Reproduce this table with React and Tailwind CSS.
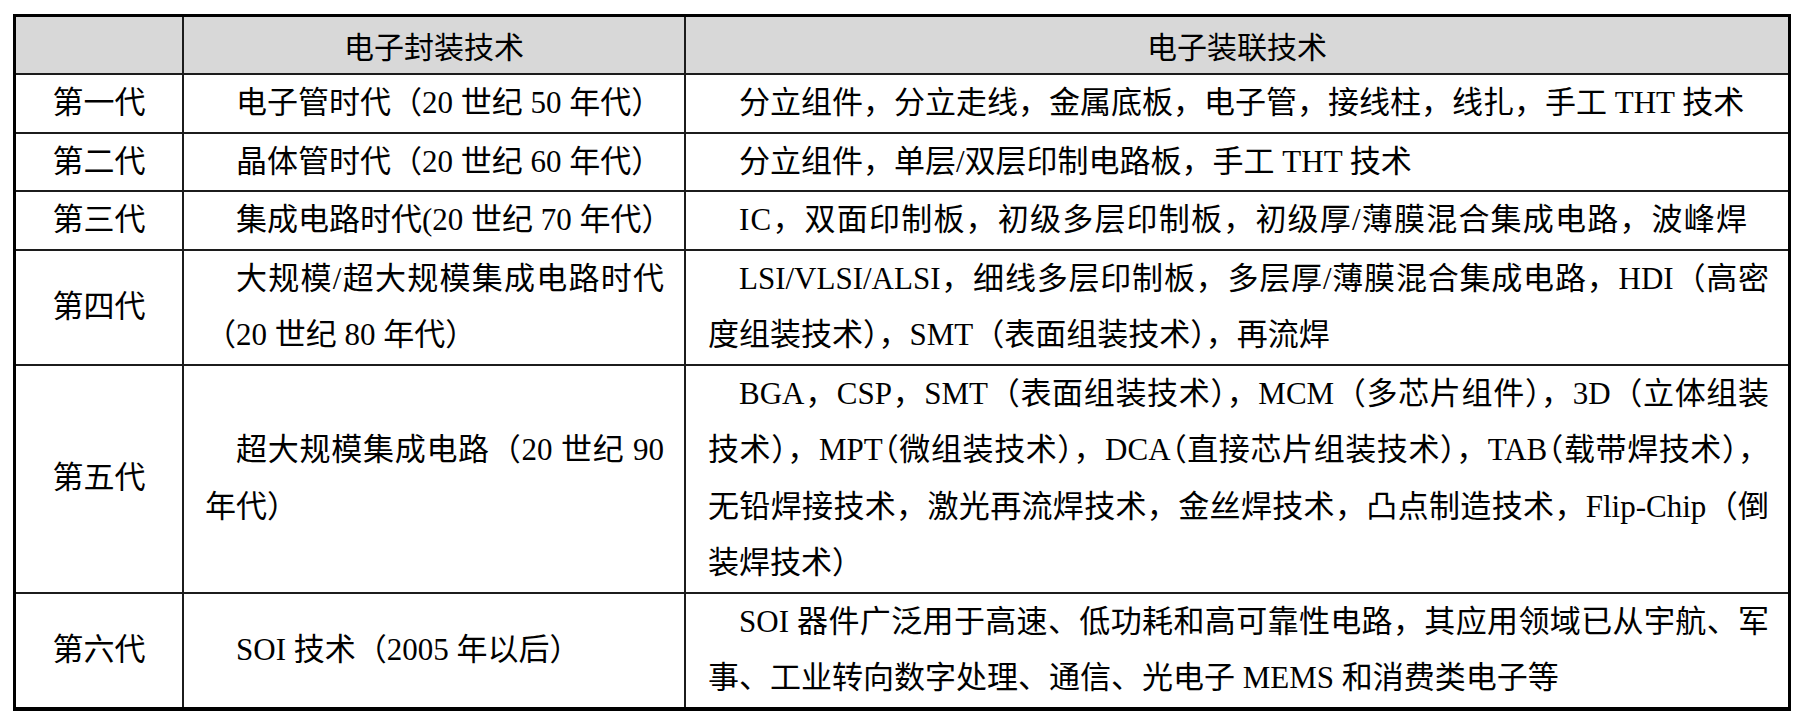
import React from "react";

function Text({ text }) {
  const parts = [];
  let buf = "";
  for (let i = 0; i < text.length; i++) {
    if (text[i] === "^") {
      if (buf) parts.push(buf);
      buf = "";
      parts.push(
        <span key={i} className="[font-feature-settings:'halt']">
          {text[i + 1]}
        </span>
      );
      i++;
    } else {
      buf += text[i];
    }
  }
  if (buf) parts.push(buf);
  return <>{parts}</>;
}

function Lines({ lines, wide }) {
  return (
    <div className="w-full">
      {lines.map((l, i) => {
        const first = i === 0;
        const last = i === lines.length - 1;
        return (
          <div
            key={i}
            className={
              "whitespace-nowrap " +
              (first ? "indent-[31px] " : "") +
              (wide ? "tracking-[1.2px] " : "") +
              (!last ? "text-justify [text-align-last:justify]" : "text-left")
            }
          >
            <Text text={l} />
          </div>
        );
      })}
    </div>
  );
}

const rows = [
  {
    gen: "第一代",
    c2: ["电子管时代（20 世纪 50 年代）"],
    c3: ["分立组件，分立走线，金属底板，电子管，接线柱，线扎，手工 THT 技术"],
  },
  {
    gen: "第二代",
    c2: ["晶体管时代（20 世纪 60 年代）"],
    c3: ["分立组件，单层/双层印制电路板，手工 THT 技术"],
  },
  {
    gen: "第三代",
    c2: ["集成电路时代(20 世纪 70 年代）"],
    c3: ["IC，双面印制板，初级多层印制板，初级厚/薄膜混合集成电路，波峰焊"],
    wide: true,
  },
  {
    gen: "第四代",
    c2: ["大规模/超大规模集成电路时代", "（20 世纪 80 年代）"],
    c3: [
      "LSI/VLSI/ALSI，细线多层印制板，多层厚/薄膜混合集成电路，HDI（高密",
      "度组装技术^），SMT（表面组装技术^），再流焊",
    ],
  },
  {
    gen: "第五代",
    c2: ["超大规模集成电路（20 世纪 90", "年代）"],
    c3: [
      "BGA，CSP，SMT（表面组装技术^），MCM（多芯片组件^），3D（立体组装",
      "技术^），MPT^（微组装技术^），DCA^（直接芯片组装技术^），TAB^（载带焊技术），",
      "无铅焊接技术，激光再流焊技术，金丝焊技术，凸点制造技术，Flip-Chip（倒",
      "装焊技术）",
    ],
  },
  {
    gen: "第六代",
    c2: ["SOI 技术（2005 年以后）"],
    c3: [
      "SOI 器件广泛用于高速、低功耗和高可靠性电路，其应用领域已从宇航、军",
      "事、工业转向数字处理、通信、光电子 MEMS 和消费类电子等",
    ],
  },
];

export default function App() {
  return (
    <div className="w-[1805px] h-[724px] bg-white pt-[14px] pl-[13px] text-black [font-family:'Liberation_Serif','Noto_Sans_CJK_SC',serif] text-[31px] leading-[56.5px]">
      <div className="w-[1778px] border-[3px] border-b-4 border-black">
        <div className="grid grid-cols-[166px_502px_1104px] h-[58px] bg-[#d8d8d8] border-b-2 border-[#1c1c1c] [font-family:'Noto_Sans_CJK_SC',sans-serif] font-normal text-[30px]">
          <div />
          <div className="border-l-2 border-[#1c1c1c] flex items-center justify-center">
            电子封装技术
          </div>
          <div className="border-l-2 border-[#1c1c1c] flex items-center justify-center">
            电子装联技术
          </div>
        </div>
        {rows.map((r, idx) => (
          <div
            key={idx}
            className={
              "grid grid-cols-[166px_502px_1104px] " +
              (idx < rows.length - 1 ? "border-b-2 border-[#1c1c1c]" : "")
            }
          >
            <div className="flex items-center justify-center">{r.gen}</div>
            <div className="border-l-2 border-[#1c1c1c] flex items-center pl-[21px] pr-[20px]">
              <Lines lines={r.c2} />
            </div>
            <div className="border-l-2 border-[#1c1c1c] flex items-center pl-[22px] pr-[19px]">
              <Lines lines={r.c3} wide={r.wide} />
            </div>
          </div>
        ))}
      </div>
    </div>
  );
}
